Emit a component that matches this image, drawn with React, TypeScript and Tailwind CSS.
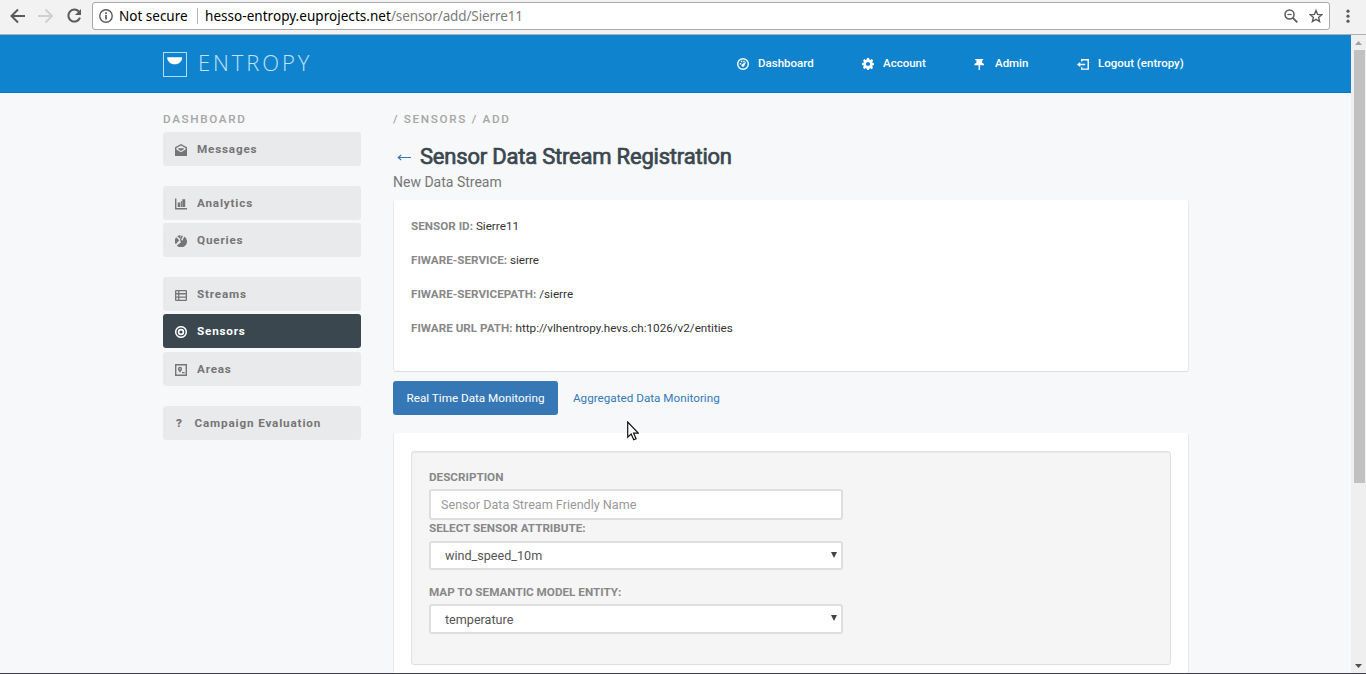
import React from "react";

type IconProps = { className?: string };

const svg = (children: React.ReactNode) =>
  function Icon({ className = "" }: IconProps) {
    return (
      <svg viewBox="0 0 12 12" className={`block size-3 shrink-0 ${className}`} fill="currentColor">
        {children}
      </svg>
    );
  };

const GaugeIcon = svg(
  <>
    <circle cx="6" cy="6" r="5.3" fill="none" stroke="currentColor" strokeWidth="1.4" />
    <path d="M2.800 5h1.400v1.400H2.800zM3.900 2.800h1.400v1.400H3.900zM6.300 2.800h1.400v1.400H6.300z" />
    <path d="M9.200 3.800 7.400 7.400A1.500 1.500 0 1 1 5.300 5.900Z" />
  </>
);
const GearIcon = svg(
  <path
    fillRule="evenodd"
    d="M4.9 0h2.2l.3 1.6 1 .4 1.3-.9 1.5 1.5L10.300 4l.4 1 1.300.2v1.900l-1.400.3-.4 1 .9 1.300-1.500 1.500L8.300 10.300l-1 .4L7 12H5l-.3-1.400-1-.4-1.400.9L.9 9.600l.9-1.300-.4-1L0 7V5l1.500-.2.4-1L1 2.500 2.500 1l1.300.9 1-.4ZM6 3.900a2.100 2.100 0 1 0 0 4.200 2.100 2.100 0 0 0 0-4.200Z"
  />
);
const PinIcon = svg(<path d="M1.200 1h8v1.300H8.100v2.500L10 6v1.300H6V12H4.600V7.300H.4V6l2-1.200V2.300H1.200Z" />);
const LogoutIcon = svg(
  <path d="M4 1h8v10.800H4V9.300h1.400v1.200h5.100V2.400H5.400v1.200H4ZM3.200 4v1.700h5v1.500h-5v1.700L0 6.400Z" />
);
const MailIcon = svg(
  <path fillRule="evenodd" d="M6 0 12 3.300V12H0V3.300ZM6 1.500 1.400 4.100v1.300L6 8.200l4.600-2.800V4.100ZM3.200 4.300h5.600v1L6 6.900 3.200 5.300Z" />
);
const ChartIcon = svg(<path d="M0 .5h1.400v9.600H12v1.500H0ZM2.700 4.500h2.600v4.500H2.700ZM5.900 3h1v6h-1ZM7.300 1.200h2.900V9H7.300Z" />);
const PieIcon = svg(
  <path d="M5.400 0v3.800L2.200 1.400A6 6 0 0 1 5.400 0ZM1.200 2.300 4.300 5.200.8 9.300a6 6 0 0 1 .4-7ZM8 1 6.200 4.800l1.200.9L9.300 1.500A5.900 5.900 0 1 1 1.800 10.500L5.800 7.400 5 4.500 6.600.4Z" />
);
const TableIcon = svg(
  <path
    fillRule="evenodd"
    d="M.8 1h10.400l.8.8v9.400l-.8.8H.8l-.8-.8V1.800ZM1.300 2.200v1.800h1.800V2.200Zm3.100 0v1.800h6.300V2.200ZM1.300 5.500v1.900h1.800V5.500Zm3.100 0v1.900h6.300V5.500ZM1.300 8.800v2h1.800v-2Zm3.100 0v2h6.300v-2Z"
  />
);
const TargetIcon = svg(
  <>
    <circle cx="6" cy="6" r="5.300" fill="none" stroke="currentColor" strokeWidth="1.500" />
    <circle cx="6" cy="6" r="2.400" fill="none" stroke="currentColor" strokeWidth="1.600" />
  </>
);
const AreaIcon = svg(
  <>
    <path fillRule="evenodd" d="M0 0h12v12H0ZM1.400 1.400v9.200h9.200V1.400Z" />
    <path fillRule="evenodd" d="M5 2.800a2.100 2.100 0 0 1 2.100 2.100C7.100 6.200 5 8.600 5 8.600S2.900 6.200 2.900 4.900A2.100 2.100 0 0 1 5 2.800Zm0 1.400a.7.7 0 1 0 0 1.400.7.7 0 0 0 0-1.400ZM7 8h2.700v1.300H7Z" />
  </>
);

function BrowserBar() {
  return (
    <div className="flex h-[35px] shrink-0 items-start border-b border-[#b0b0b0] bg-[#f2f2f2] text-[#5a5a5a]">
      <div className="flex w-[92px] shrink-0 items-center gap-3 pt-2 pl-[10px]">
        <svg viewBox="0 0 16 16" className="size-4" fill="none" stroke="currentColor" strokeWidth="2">
          <path d="M15 8H2.500M8 1.500 1.500 8 8 14.500" />
        </svg>
        <svg viewBox="0 0 16 16" className="size-4 text-[#d0d0d0]" fill="none" stroke="currentColor" strokeWidth="2">
          <path d="M0 8h13M7.500 1.500 14 8l-6.500 6.500" />
        </svg>
        <svg viewBox="0 0 16 16" className="size-4" fill="none" stroke="currentColor" strokeWidth="2">
          <path d="M12.800 3.500A6 6 0 1 0 14 9.700" />
          <path d="M15 1v6H9Z" fill="currentColor" stroke="none" />
        </svg>
      </div>
      <div className="mt-0.5 flex h-7 w-[1238px] shrink-0 items-center rounded-[3px] border border-[#a9a9a9] bg-white pl-1.5 font-['Noto_Sans',sans-serif] text-[13.500px] text-black">
        <svg viewBox="0 0 14 14" className="shrink-0 text-[#5a5a5a]" width="14" height="14" fill="none" stroke="currentColor" strokeWidth="1.400">
          <circle cx="7" cy="7" r="6.200" />
          <path d="M7 6v4.500M7 3.300v1.600" strokeWidth="1.700" />
        </svg>
        <span className="ml-1.5 w-[69px] whitespace-nowrap">Not secure</span>
        <span className="ml-[9px] h-4 w-px bg-[#b5b5b5]" />
        <span className="ml-[7px] whitespace-nowrap">
          <span className="tracking-[0.040px]">hesso-entropy.euprojects.net</span>
          <span className="tracking-[-0.120px] text-[#7a7a7a]">/sensor/add/Sierre11</span>
        </span>
        <div className="mr-1.5 ml-auto flex items-center gap-[11px] text-[#5a5a5a]">
          <svg viewBox="0 0 14 14" className="size-[14px]" fill="none" stroke="currentColor" strokeWidth="1.500">
            <circle cx="5.500" cy="5.500" r="4.500" />
            <path d="M3.400 5.500h4.200" strokeWidth="1.200" />
            <path d="m8.800 8.800 4.500 4.500" strokeWidth="1.900" />
          </svg>
          <svg viewBox="0 0 14 14" className="size-[14px]" fill="none" stroke="currentColor" strokeWidth="1.400">
            <path d="m7 1.500 1.600 3.900 4.200.3-3.200 2.700 1 4.100L7 10.300l-3.600 2.200 1-4.100L1.200 5.700l4.200-.3Z" />
          </svg>
        </div>
      </div>
      <svg viewBox="0 0 4 14" className="mt-[9px] ml-4 h-3.5 w-1" fill="currentColor">
        <circle cx="2" cy="2.200" r="1.600" />
        <circle cx="2" cy="7.200" r="1.600" />
        <circle cx="2" cy="12.200" r="1.600" />
      </svg>
    </div>
  );
}

function NavItem({ icon: Icon, label, className }: { icon: React.FC<IconProps>; label: string; className: string }) {
  return (
    <a className={`flex shrink-0 items-center gap-[9px] whitespace-nowrap ${className}`}>
      <Icon className="mt-px" />
      <span>{label}</span>
    </a>
  );
}

function Header() {
  return (
    <header className="flex h-[58px] shrink-0 items-center border-b border-[#0a76bd] bg-[#1083ce] pl-[163px] text-[11.500px] font-medium text-white">
      <svg viewBox="0 0 25 25" className="mt-px size-[25px] shrink-0">
        <rect x=".5" y=".5" width="23" height="24" fill="none" stroke="#b5dcf5" />
        <path d="M4.200 5.300h15c0 4.300-3.200 7-7.500 7s-7.500-2.700-7.500-7Z" fill="#fff" />
      </svg>
      <span className="mb-[3px] ml-[9px] w-[115px] pl-px font-['Open_Sans',sans-serif] text-[22px] leading-[22px] font-light tracking-[2.900px] text-[#c4e2f5]">
        ENTROPY
      </span>
      <nav className="ml-[425px] flex items-center">
        <NavItem icon={GaugeIcon} label="Dashboard" className="w-[125px]" />
        <NavItem icon={GearIcon} label="Account" className="w-[112px]" />
        <NavItem icon={PinIcon} label="Admin" className="w-[103px]" />
        <NavItem icon={LogoutIcon} label="Logout (entropy)" className="" />
      </nav>
    </header>
  );
}

function SideItem({ icon: Icon, label, className = "", active = false }: { icon: React.FC<IconProps>; label: string; className?: string; active?: boolean }) {
  return (
    <a
      className={`flex h-[34px] items-center gap-[10px] rounded-[3px] pl-3 text-[11.700px] font-bold tracking-[0.820px] ${
        active ? "bg-[#3a474e] text-white" : "bg-[#e9eaeb] text-[#757575]"
      } ${className}`}
    >
      <Icon className="mt-0.5" />
      <span className="leading-4">{label}</span>
    </a>
  );
}

function Sidebar() {
  return (
    <aside className="w-[198px] shrink-0 pt-[18px]">
      <div className="h-[21px] text-[11.700px] leading-4 font-medium tracking-[1.650px] text-[#a6a6a6]">DASHBOARD</div>
      <SideItem icon={MailIcon} label="Messages" />
      <SideItem icon={ChartIcon} label="Analytics" className="mt-5" />
      <SideItem icon={PieIcon} label="Queries" className="mt-[3px]" />
      <SideItem icon={TableIcon} label="Streams" className="mt-5" />
      <SideItem icon={TargetIcon} label="Sensors" className="mt-[3px]" active />
      <SideItem icon={AreaIcon} label="Areas" className="mt-1" />
      <a className="mt-5 flex h-[34px] items-center rounded-[3px] bg-[#e9eaeb] pl-3 text-[11.700px] leading-4 font-bold tracking-[0.840px] text-[#757575]">
        <span className="w-[19.500px] pl-px font-black">?</span>
        <span>Campaign Evaluation</span>
      </a>
    </aside>
  );
}

function Detail({ name, value }: { name: string; value: string }) {
  return (
    <p className="mb-[18px] leading-4 text-[#333]">
      <b className="font-bold text-[#888]">{name}</b> {value}
    </p>
  );
}

function SelectBox({ value, className }: { value: string; className: string }) {
  return (
    <div className={`flex w-[414px] items-center justify-between rounded-[3px] border-2 border-[#dedede] bg-white pr-1 pl-[13px] text-[12.600px] text-[#555] ${className}`}>
      <span className="pt-0.5 pl-px">{value}</span>
      <svg viewBox="0 0 6 6" className="mb-0.5 size-1.5" fill="#444">
        <path d="M0 0h6L3 6Z" />
      </svg>
    </div>
  );
}

function Content() {
  return (
    <section className="ml-8 flex w-[796px] shrink-0 flex-col pt-[18px] text-[11.700px]">
      <div className="h-4 leading-4 font-medium tracking-[1.680px] text-[#a6a6a6]">/ SENSORS / ADD</div>
      <h1 className="mt-[14px] flex h-8 items-center text-[22px] leading-8 tracking-[-0.210px] whitespace-nowrap text-[#3a474e] [-webkit-text-stroke:0.700px_#3a474e]">
        <svg viewBox="0 0 14 8" className="ml-1 h-2 w-3.5 shrink-0" fill="none" stroke="#337ab7" strokeWidth="1.100">
          <path d="M14 4.500H1.500M4.200 2 1.200 4.500l3 2.500" />
        </svg>
        <span className="ml-[9px]">Sensor Data Stream Registration</span>
      </h1>
      <div className="-mt-px h-5 text-[14px] leading-5 text-[#777]">New Data Stream</div>
      <div className="mt-2 h-[172px] shrink-0 rounded-[3px] border border-[#e6e9eb] border-t-white border-b-[#dcdfe1] bg-white px-[17px] pt-[17px]">
        <Detail name="SENSOR ID:" value="Sierre11" />
        <Detail name="FIWARE-SERVICE:" value="sierre" />
        <Detail name="FIWARE-SERVICEPATH:" value="/sierre" />
        <Detail name="FIWARE URL PATH:" value="http://vlhentropy.hevs.ch:1026/v2/entities" />
      </div>
      <div className="relative mt-[9px] flex h-[34px] shrink-0 items-center">
        <span className="flex h-[34px] w-[165px] items-center justify-center rounded-[3px] bg-[#3678b5] pt-px whitespace-nowrap text-white">Real Time Data Monitoring</span>
        <span className="ml-[15px] pt-px whitespace-nowrap text-[#337ab7]">Aggregated Data Monitoring</span>
        <svg viewBox="0 0 12 20" className="absolute top-10 left-[234px] h-5 w-3" fill="#fff" stroke="#111" strokeWidth="1.200">
          <path d="M.7 1v15.200l3.500-3.200 2.500 5.800 2.400-1.100-2.500-5.500h4.700Z" />
        </svg>
      </div>
      <div className="mt-[18px] h-60 shrink-0 rounded-t-[3px] border-x border-[#e6e9eb] bg-white px-[17px] pt-[18px]">
        <div className="flex h-[214px] flex-col rounded-[3px] border border-[#e0e0e0] bg-[#f5f5f5] px-[17px] pt-[17px] font-bold text-[#888] shadow-[inset_0_1px_1px_rgba(0,0,0,0.05)]">
          <div className="h-5 leading-4">DESCRIPTION</div>
          <div className="flex h-[31px] w-[414px] items-center rounded-[3px] border-2 border-[#dedede] bg-white pt-px pl-2.5 text-[12.600px] font-normal text-[#999]">
            Sensor Data Stream Friendly Name
          </div>
          <div className="h-[21px] leading-4">SELECT SENSOR ATTRIBUTE:</div>
          <SelectBox value="wind_speed_10m" className="h-[29px] font-normal" />
          <div className="mt-[14px] h-5 leading-4">MAP TO SEMANTIC MODEL ENTITY:</div>
          <SelectBox value="temperature" className="h-[30px] font-normal" />
        </div>
      </div>
    </section>
  );
}

function Scrollbar() {
  return (
    <div className="flex w-[15px] shrink-0 flex-col items-center bg-[#efefef]">
      <svg viewBox="0 0 7 4" className="mt-1.5 h-1 w-[7px]" fill="#a0a0a0">
        <path d="M0 4h7L3.500 0Z" />
      </svg>
      <div className="mt-[5px] ml-px h-[433px] w-[11px] bg-[#c1c1c1]" />
      <svg viewBox="0 0 7 4" className="mt-auto mb-[5px] h-1 w-[7px]" fill="#505050">
        <path d="M0 0h7L3.500 4Z" />
      </svg>
    </div>
  );
}

export default function App() {
  return (
    <div className="flex h-[674px] w-[1366px] flex-col overflow-hidden border-b border-[#3f3d52] bg-[#f6f8fa] font-[Roboto,sans-serif]">
      <BrowserBar />
      <div className="flex min-h-0 flex-1">
        <div className="flex min-h-0 w-[1351px] flex-col overflow-hidden">
          <Header />
          <main className="flex min-h-0 flex-1 pl-[163px]">
            <Sidebar />
            <Content />
          </main>
        </div>
        <Scrollbar />
      </div>
    </div>
  );
}
